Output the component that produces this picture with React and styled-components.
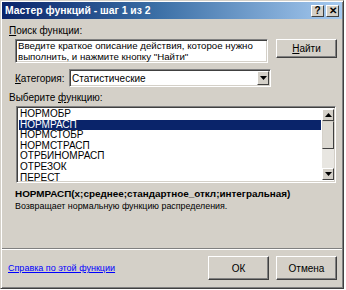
import React from 'react'
import styled, { createGlobalStyle } from 'styled-components'

const GlobalStyle = createGlobalStyle`
  html, body {
    margin: 0;
    padding: 0;
    background: #ffffff;
  }
  body {
    font-family: "Liberation Sans", Arial, sans-serif;
    font-size: 10px;
    color: #000;
  }
`

const Dialog = styled.div`
  width: 344px;
  height: 289px;
  box-sizing: border-box;
  background: #d4d0c8;
  border: 1px solid;
  border-color: #d4d0c8 #404040 #404040 #d4d0c8;
  box-shadow: inset 1px 1px 0 #ffffff, inset -1px -1px 0 #808080;
  display: flex;
  flex-direction: column;
  padding: 1px;
`

const TitleBar = styled.div`
  height: 17px;
  display: flex;
  align-items: center;
  justify-content: space-between;
  padding: 0 3px 0 3px;
  background: linear-gradient(90deg, #0a246a 0%, #3a6ea5 45%, #a6caf0 100%);
  color: #fff;
  font-weight: bold;
  font-size: 10.4px;
`

const TitleButtons = styled.div`
  display: flex;
  gap: 2px;
`

const TitleButton = styled.div`
  width: 13px;
  height: 12px;
  box-sizing: border-box;
  background: #d4d0c8;
  border: 1px solid;
  border-color: #fff #404040 #404040 #fff;
  color: #000;
  font-size: 10px;
  font-weight: bold;
  line-height: 10px;
  text-align: center;
`

const Body = styled.div`
  flex: 1;
  display: flex;
  flex-direction: column;
  padding: 0 5px;
`

const Label = styled.div`
  margin-top: ${p => p.$top || 0}px;
  margin-left: ${p => p.$left || 0}px;
  line-height: 12px;
  font-size: 10px;
  white-space: nowrap;
`

const Key = styled.span`
  text-decoration: underline;
`

const SearchRow = styled.div`
  display: flex;
  align-items: flex-start;
  margin-top: 2px;
  padding-left: 8px;
`

const Sunken = styled.div`
  box-sizing: border-box;
  background: #fff;
  border: 1px solid;
  border-color: #808080 #fff #fff #808080;
  box-shadow: inset 1px 1px 0 #404040, inset -1px -1px 0 #d4d0c8;
`

const SearchBox = styled(Sunken)`
  width: 253px;
  height: 24px;
  padding: 1px 2px;
  line-height: 10.5px;
  font-size: 9.7px;
`

const Button = styled.div`
  box-sizing: border-box;
  width: ${p => p.$w}px;
  height: ${p => p.$h}px;
  margin-left: ${p => p.$ml || 0}px;
  background: #d4d0c8;
  border: 1px solid;
  border-color: #fff #404040 #404040 #fff;
  box-shadow: inset -1px -1px 0 #808080;
  display: flex;
  align-items: center;
  justify-content: center;
  font-size: 10px;
`

const CategoryRow = styled.div`
  display: flex;
  align-items: center;
  margin-top: 6px;
  padding-left: 8px;
  font-size: 10px;
`

const Select = styled(Sunken)`
  width: 202px;
  height: 18px;
  margin-left: auto;
  margin-right: 66px;
  display: flex;
  align-items: center;
  justify-content: space-between;
  padding: 0 1px 0 2px;
  font-size: 10px;
`

const ArrowButton = styled.div`
  box-sizing: border-box;
  width: 12px;
  height: ${p => p.$h || 14}px;
  background: #d4d0c8;
  border: 1px solid;
  border-color: #fff #404040 #404040 #fff;
  display: flex;
  align-items: center;
  justify-content: center;
`

const ListBox = styled(Sunken)`
  width: 320px;
  height: 77px;
  margin-top: 2px;
  margin-left: 9px;
  display: flex;
  padding: 2px 1px 2px 2px;
`

const Items = styled.div`
  flex: 1;
  display: flex;
  flex-direction: column;
  margin-right: 1px;
`

const Item = styled.div`
  height: 10.6px;
  line-height: 10.6px;
  font-size: 10px;
  padding-left: 1px;
  background: ${p => (p.$selected ? '#0a246a' : 'transparent')};
  color: ${p => (p.$selected ? '#fff' : '#000')};
`

const ScrollBar = styled.div`
  width: 12px;
  display: flex;
  flex-direction: column;
  justify-content: space-between;
  background: #e8e6e1;
`

const Thumb = styled.div`
  box-sizing: border-box;
  width: 12px;
  height: 28px;
  background: #dcd9d2;
  border: 1px solid;
  border-color: #d4d0c8 #404040 #404040 #d4d0c8;
`

const ScrollTop = styled.div`
  display: flex;
  flex-direction: column;
`

const Signature = styled.div`
  margin-top: 4px;
  margin-left: 8px;
  font-weight: bold;
  font-size: 9.9px;
  line-height: 13px;
  white-space: nowrap;
`

const Description = styled.div`
  margin-left: 8px;
  font-size: 8.9px;
  line-height: 12px;
`

const Separator = styled.div`
  margin-top: auto;
  margin-left: -5px;
  margin-right: -5px;
  height: 0;
  border-top: 1px solid #808080;
  border-bottom: 1px solid #fff;
`

const Footer = styled.div`
  display: flex;
  align-items: center;
  height: 36px;
  padding-bottom: 1px;
`

const HelpLink = styled.a`
  color: #0000ff;
  text-decoration: underline;
  font-size: 9px;
  margin-right: auto;
  margin-left: 1px;
`

const Tri = ({ up }) => (
  <svg width="7" height="4" viewBox="0 0 7 4">
    <path d={up ? 'M3.5 0 L7 4 L0 4 Z' : 'M0 0 L7 0 L3.5 4 Z'} fill="#000" />
  </svg>
)

const functions = [
  'НОРМОБР',
  'НОРМРАСП',
  'НОРМСТОБР',
  'НОРМСТРАСП',
  'ОТРБИНОМРАСП',
  'ОТРЕЗОК',
  'ПЕРЕСТ',
]

export default function App() {
  return (
    <>
      <GlobalStyle />
      <Dialog>
        <TitleBar>
          <span>Мастер функций - шаг 1 из 2</span>
          <TitleButtons>
            <TitleButton>?</TitleButton>
            <TitleButton>✕</TitleButton>
          </TitleButtons>
        </TitleBar>
        <Body>
          <Label $top={6} $left={2}><Key>П</Key>оиск функции:</Label>
          <SearchRow>
            <SearchBox>
              Введите краткое описание действия, которое нужно выполнить, и нажмите кнопку "Найти"
            </SearchBox>
            <Button $w={61} $h={19} $ml={8}><span><Key>Н</Key>айти</span></Button>
          </SearchRow>
          <CategoryRow>
            <span><Key>К</Key>атегория:</span>
            <Select>
              <span>Статистические</span>
              <ArrowButton><Tri /></ArrowButton>
            </Select>
          </CategoryRow>
          <Label $top={5} $left={2}>Выберите <Key>ф</Key>ункцию:</Label>
          <ListBox>
            <Items>
              {functions.map((f, i) => (
                <Item key={f} $selected={i === 1}>{f}</Item>
              ))}
            </Items>
            <ScrollBar>
              <ScrollTop>
                <ArrowButton $h={12}><Tri up /></ArrowButton>
                <Thumb />
              </ScrollTop>
              <ArrowButton $h={12}><Tri /></ArrowButton>
            </ScrollBar>
          </ListBox>
          <Signature>НОРМРАСП(x;среднее;стандартное_откл;интегральная)</Signature>
          <Description>Возвращает нормальную функцию распределения.</Description>
          <Separator />
          <Footer>
            <HelpLink href="#">Справка по этой функции</HelpLink>
            <Button $w={61} $h={24}>ОК</Button>
            <Button $w={61} $h={24} $ml={7}>Отмена</Button>
          </Footer>
        </Body>
      </Dialog>
    </>
  )
}
